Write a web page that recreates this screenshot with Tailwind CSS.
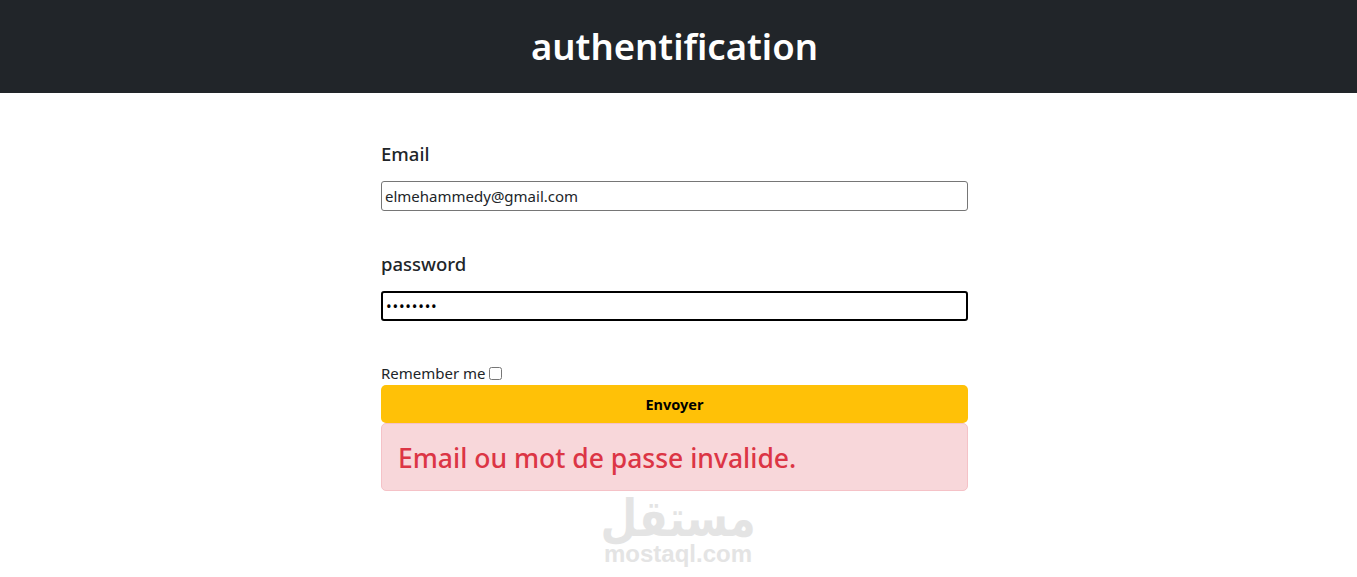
<!DOCTYPE html>
<html lang="fr">
<head>
<meta charset="utf-8">
<title>authentification</title>
<script src="https://cdn.jsdelivr.net/npm/@tailwindcss/browser@4"></script>
</head>
<body class="relative h-[577px] w-[1357px] overflow-hidden bg-white font-['Noto_Sans',sans-serif] text-[#212529]">
<div class="w-[1349px]">
<header class="relative">
  <div class="absolute top-0 left-0 h-[93px] w-[1357px] bg-[#212529]"></div>
  <div class="relative flex h-[93px] items-center justify-center">
    <h1 class="text-[36.5px] leading-none font-semibold text-white">authentification</h1>
  </div>
</header>
<main class="mx-auto w-[587px] pt-[47px]">
  <form>
    <label for="email" class="block h-[41px] text-[18.5px] leading-[28px] font-medium">Email</label>
    <input id="email" type="text" value="elmehammedy@gmail.com" class="block h-[30px] w-full rounded-[3px] border border-[#767676] px-[3px] text-[15px] text-[#212529] outline-none">
    <label for="password" class="mt-[39px] block h-[41px] text-[18.5px] leading-[28px] font-medium">password</label>
    <input id="password" type="password" value="password" class="block h-[30px] w-full rounded-[3px] border-2 border-black px-[3px] text-[15px] tracking-[0.8px] text-black outline-none">
    <div class="mt-[40px] flex h-[24px] items-center text-[15px] leading-[24px]">
      <label for="remember">Remember me</label>
      <input id="remember" type="checkbox" class="ml-[3px] h-[13px] w-[13px] appearance-auto">
    </div>
    <button type="button" class="block h-[38px] w-full rounded-[5px] bg-[#ffc107] pt-[2px] text-[14.5px] font-bold text-black">Envoyer</button>
  </form>
  <div class="flex h-[68px] items-center rounded-[5px] border border-[#f5c2c7] bg-[#f8d7da] px-4 pt-[4px] text-[26.5px] font-medium text-[#dc3545]">Email ou mot de passe invalide.</div>
</main>
</div>
<div class="absolute top-[495px] left-[603px] flex w-[150px] flex-col items-center text-[#e4e4e4]">
  <span dir="rtl" lang="ar" class="block h-[46px] scale-x-[1.06] scale-y-[1.27] font-['DejaVu_Sans',sans-serif] text-[40px] leading-[46px] font-bold">مستقل</span>
  <span class="mt-[1px] font-['Liberation_Sans',sans-serif] text-[24px] leading-[24px] font-bold">mostaql.com</span>
</div>
</body>
</html>
